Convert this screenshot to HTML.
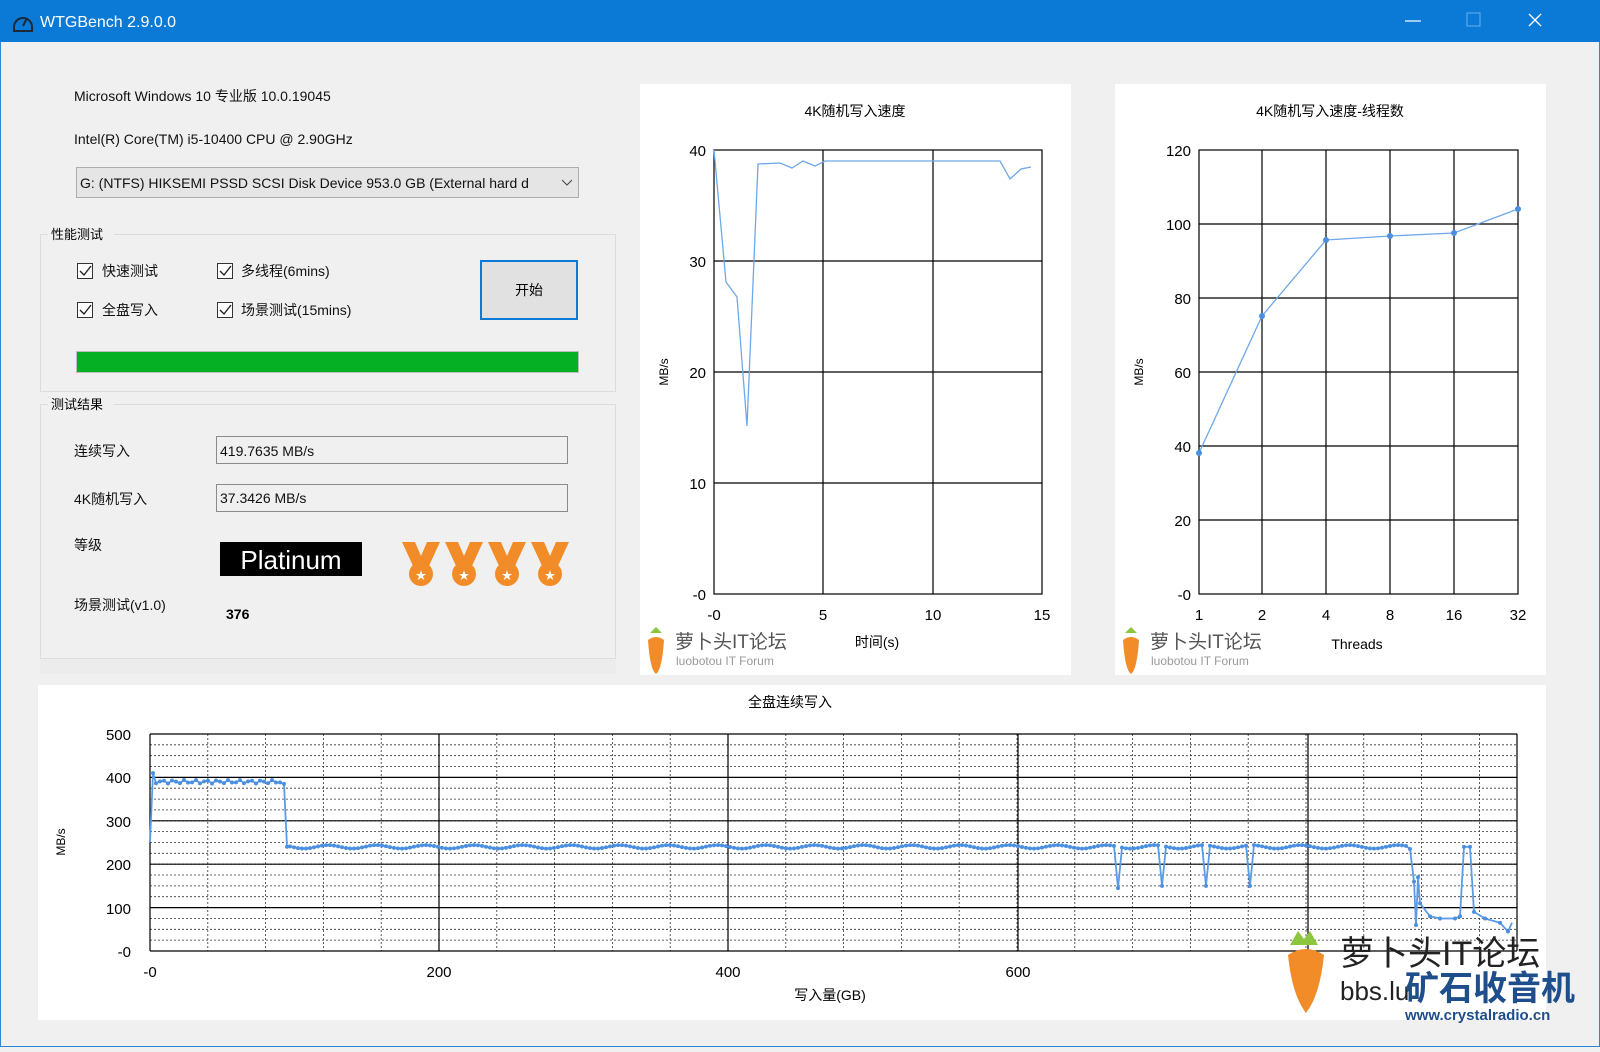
<!DOCTYPE html>
<html><head><meta charset="utf-8"><style>
body{margin:0;width:1600px;height:1047px;overflow:hidden;background:#f0f0f0;font-family:"Liberation Sans","Noto Sans CJK SC",sans-serif;}
svg text{font-family:"Liberation Sans","Noto Sans CJK SC",sans-serif;}
</style></head><body>
<svg id="s" width="1600" height="1047" xmlns="http://www.w3.org/2000/svg">
<defs><marker id="dot" viewBox="0 0 4 4" refX="2" refY="2" markerWidth="4" markerHeight="4" markerUnits="userSpaceOnUse"><circle cx="2" cy="2" r="2" fill="#4a8fe0"/></marker></defs>
<rect x="0" y="0" width="1600" height="1047" fill="#f0f0f0"/>
<rect x="0.5" y="0.5" width="1599" height="1046" fill="none" stroke="#2b86d8"/>
<rect x="0" y="0" width="1600" height="42" fill="#0a7ad6"/>
<path d="M14 27 a9 9 0 1 1 18 0 v4 h-18z" fill="none" stroke="#1a2a3a" stroke-width="2"/>
<path d="M23 26 l4 -8" stroke="#1a2a3a" stroke-width="2"/>
<text x="40" y="27" font-size="16" fill="#fff">WTGBench 2.9.0.0</text>
<path d="M1405 21h16" stroke="#fff" stroke-width="1.2"/>
<rect x="1467" y="13" width="13" height="13" fill="none" stroke="#6aaee8"/>
<path d="M1529 14l12 12M1541 14l-12 12" stroke="#fff" stroke-width="1.4"/>

<g font-size="14" fill="#111">
<text x="74" y="101">Microsoft Windows 10 专业版 10.0.19045</text>
<text x="74" y="144">Intel(R) Core(TM) i5-10400 CPU @ 2.90GHz</text>
</g>
<rect x="76.5" y="167.5" width="502" height="30" fill="#e5e5e5" stroke="#adadad"/>
<text x="80" y="188" font-size="14" fill="#111">G:  (NTFS) HIKSEMI PSSD SCSI Disk Device 953.0 GB (External hard d</text>
<path d="M562 180l5 5 5-5" fill="none" stroke="#444"/>

<rect x="40.5" y="234.5" width="575" height="157" fill="none" stroke="#dcdcdc"/>
<rect x="48" y="226" width="66" height="16" fill="#f0f0f0"/>
<text x="51" y="239" font-size="13">性能测试</text>
<g fill="#fff" stroke="#333"><rect x="77.5" y="263.5" width="15" height="15"/><rect x="217.5" y="263.5" width="15" height="15"/><rect x="77.5" y="302.5" width="15" height="15"/><rect x="217.5" y="302.5" width="15" height="15"/></g>
<g fill="none" stroke="#222" stroke-width="1.4"><path d="M80 271l4 4 7-9"/><path d="M220 271l4 4 7-9"/><path d="M80 310l4 4 7-9"/><path d="M220 310l4 4 7-9"/></g>
<g font-size="14" fill="#111"><text x="102" y="276">快速测试</text><text x="241" y="276">多线程(6mins)</text><text x="102" y="315">全盘写入</text><text x="241" y="315">场景测试(15mins)</text></g>
<rect x="481" y="261" width="96" height="58" fill="#e1e1e1" stroke="#0a7ad6" stroke-width="2"/>
<text x="529" y="295" font-size="14" text-anchor="middle">开始</text>
<rect x="76.5" y="351.5" width="502" height="21" fill="#06b025" stroke="#bcbcbc"/>

<rect x="40.5" y="404.5" width="575" height="254" fill="none" stroke="#dcdcdc"/>
<rect x="48" y="396" width="66" height="16" fill="#f0f0f0"/>
<text x="51" y="409" font-size="13">测试结果</text>
<g font-size="14" fill="#111"><text x="74" y="456">连续写入</text><text x="74" y="504">4K随机写入</text><text x="74" y="550">等级</text><text x="74" y="610">场景测试(v1.0)</text></g>
<rect x="216.5" y="436.5" width="351" height="27" fill="#f0f0f0" stroke="#8a8a8a"/>
<rect x="216.5" y="484.5" width="351" height="27" fill="#f0f0f0" stroke="#8a8a8a"/>
<g font-size="14" fill="#111"><text x="220" y="456">419.7635 MB/s</text><text x="220" y="503">37.3426 MB/s</text></g>
<rect x="220" y="542" width="142" height="34" fill="#000"/>
<text x="291" y="569" font-size="26" fill="#fff" text-anchor="middle">Platinum</text>
<text x="226" y="619" font-size="14" font-weight="bold">376</text>
<g id="medal"><path d="M402 542h13l6 14 6-14h13l-12 26h-14z" fill="#f28c28"/><circle cx="421" cy="574" r="12" fill="#f28c28"/><text x="421" y="579" font-size="11" fill="#fff" text-anchor="middle">★</text></g>
<use href="#medal" x="43"/><use href="#medal" x="86"/><use href="#medal" x="129"/>
<rect x="40" y="659" width="576" height="15" fill="#ececec"/>

<rect x="640" y="84" width="431" height="591" fill="#fff"/>
<text x="855" y="116" font-size="14" text-anchor="middle">4K随机写入速度</text>
<g stroke="#000" stroke-width="1.2" fill="none">
<rect x="714" y="150" width="328" height="444"/>
<path d="M714 261h328M714 372h328M714 483h328M823 150v444M933 150v444"/>
</g>
<g font-size="15" text-anchor="end"><text x="706" y="156">40</text><text x="706" y="267">30</text><text x="706" y="378">20</text><text x="706" y="489">10</text><text x="706" y="600">-0</text></g>
<g font-size="15" text-anchor="middle"><text x="714" y="620">-0</text><text x="823" y="620">5</text><text x="933" y="620">10</text><text x="1042" y="620">15</text><text x="877" y="647" font-size="14">时间(s)</text></g>
<text x="668" y="372" font-size="12" transform="rotate(-90 668 372)" text-anchor="middle">MB/s</text>
<polyline fill="none" stroke="#6fa8e8" stroke-width="1.3" points="714,150 726,282 737,297 747,426 758,164 780,163 792,168 803,161 815,166 825,161 1000,161 1010,179 1021,169 1031,167"/>
<g id="logo"><path d="M648 640 q8-6 16 0 q-2 30-8 34 q-6-4-8-34z" fill="#f28c28"/><path d="M650 633l6-6 6 6z" fill="#8cc63f"/></g>
<text x="675" y="648" font-size="19" fill="#555">萝卜头IT论坛</text>
<text x="676" y="665" font-size="12" fill="#999">luobotou IT Forum</text>

<rect x="1115" y="84" width="431" height="591" fill="#fff"/>
<text x="1330" y="116" font-size="14" text-anchor="middle">4K随机写入速度-线程数</text>
<g stroke="#000" stroke-width="1.2" fill="none">
<rect x="1199" y="150" width="319" height="444"/>
<path d="M1199 224h319M1199 298h319M1199 372h319M1199 446h319M1199 520h319M1262 150v444M1326 150v444M1390 150v444M1454 150v444"/>
</g>
<g font-size="15" text-anchor="end"><text x="1191" y="156">120</text><text x="1191" y="230">100</text><text x="1191" y="304">80</text><text x="1191" y="378">60</text><text x="1191" y="452">40</text><text x="1191" y="526">20</text><text x="1191" y="600">-0</text></g>
<g font-size="15" text-anchor="middle"><text x="1199" y="620">1</text><text x="1262" y="620">2</text><text x="1326" y="620">4</text><text x="1390" y="620">8</text><text x="1454" y="620">16</text><text x="1518" y="620">32</text><text x="1357" y="649" font-size="14">Threads</text></g>
<text x="1143" y="372" font-size="12" transform="rotate(-90 1143 372)" text-anchor="middle">MB/s</text>
<polyline fill="none" stroke="#6fa8e8" stroke-width="1.3" points="1199,453 1262,316 1326,240 1390,236 1454,233 1518,209"/>
<g fill="#4a8fe0"><circle cx="1199" cy="453" r="3"/><circle cx="1262" cy="316" r="3"/><circle cx="1326" cy="240" r="3"/><circle cx="1390" cy="236" r="3"/><circle cx="1454" cy="233" r="3"/><circle cx="1518" cy="209" r="3"/></g>
<use href="#logo" x="475"/>
<text x="1150" y="648" font-size="19" fill="#555">萝卜头IT论坛</text>
<text x="1151" y="665" font-size="12" fill="#999">luobotou IT Forum</text>

<rect x="38" y="685" width="1508" height="335" fill="#fff"/>
<text x="790" y="707" font-size="14" text-anchor="middle">全盘连续写入</text>
<g id="grid"></g>
<g font-size="15" text-anchor="end"><text x="131" y="740">500</text><text x="131" y="783">400</text><text x="131" y="827">300</text><text x="131" y="870">200</text><text x="131" y="914">100</text><text x="131" y="957">-0</text></g>
<g font-size="15" text-anchor="middle"><text x="150" y="977">-0</text><text x="439" y="977">200</text><text x="728" y="977">400</text><text x="1018" y="977">600</text><text x="830" y="1000" font-size="14">写入量(GB)</text></g>
<text x="65" y="842" font-size="12" transform="rotate(-90 65 842)" text-anchor="middle">MB/s</text>
<polyline id="bl" fill="none" stroke="#5b9be6" stroke-width="1.8" marker-mid="url(#dot)" points=""/>
<path d="M1288 955 q18-12 36 0 q-4 40-18 58 q-14-18-18-58z" fill="#f28c28"/><path d="M1290 945l8-14 6 8 6-8 8 14z" fill="#8cc63f"/>
<text x="1340" y="965" font-size="34" fill="#222">萝卜头IT论坛</text>
<text x="1340" y="1000" font-size="26" fill="#222">bbs.lu</text>
<text x="1405" y="1000" font-size="34" font-weight="bold" fill="#1f4e8c">矿石收音机</text>
<text x="1405" y="1020" font-size="15" font-weight="bold" fill="#1f4e8c">www.crystalradio.cn</text>
</svg>
<script>
var g=document.getElementById('grid'),h='';
for(var y=951;y>=734;y-=10.85){h+='<path d="M150 '+y.toFixed(1)+'h1367" stroke="#333" stroke-dasharray="2 2" stroke-width="0.8"/>';}
for(var x=150;x<=1517;x+=57.8){h+='<path d="M'+x.toFixed(1)+' 734v217" stroke="#333" stroke-dasharray="2 2" stroke-width="0.8"/>';}
[951,907.6,864.2,820.8,777.4,734].forEach(function(y){h+='<path d="M150 '+y+'h1367" stroke="#000" stroke-width="1.2"/>';});
[150,439,728,1018,1308,1517].forEach(function(x){h+='<path d="M'+x+' 734v217" stroke="#000" stroke-width="1.2"/>';});
g.innerHTML=h;
function Y(v){return 951-v*0.434;}
var p=[[150,Y(250)],[153,Y(410)]],x;
for(x=156;x<283;x+=4)p.push([x,Y(390+Math.sin(x)*4)]);
p.push([284,Y(385)],[287,Y(240)]);
var dips={432:190,1118:145,1162:150,1207:150,1251:150};
for(x=290;x<1408;x+=4){var v=240+Math.sin(x*1.7)*4;for(var d in dips){if(Math.abs(x-d)<2)v=dips[d];}p.push([x,Y(v)]);}
p=p.concat([[1410,Y(235)],[1414,Y(160)],[1416,Y(60)],[1418,Y(170)],[1420,Y(110)],[1430,Y(80)],[1440,Y(75)],[1455,Y(75)],[1460,Y(80)],[1464,Y(240)],[1470,Y(240)],[1474,Y(90)],[1485,Y(75)],[1500,Y(65)],[1508,Y(45)],[1512,Y(65)]]);
document.getElementById('bl').setAttribute('points',p.map(function(a){return a[0]+','+a[1].toFixed(1);}).join(' '));
</script>
</body></html>
